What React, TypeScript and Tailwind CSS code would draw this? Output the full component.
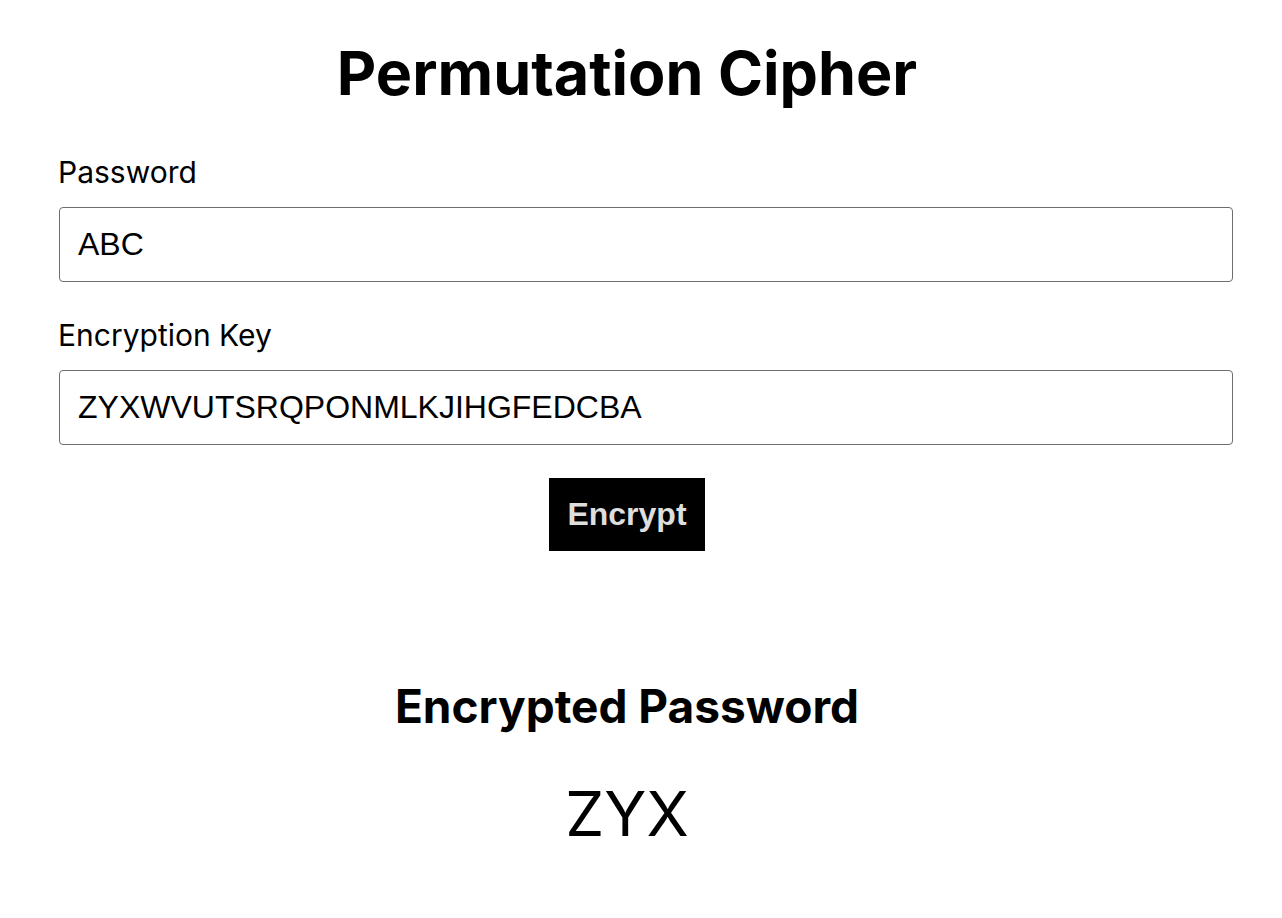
import { useState } from "react";

// simple permutation: each letter of the password maps to the key letter at its alphabet index
function encrypt(text: string, key: string) {
  return text
    .toUpperCase()
    .split("")
    .map((ch) => {
      const i = ch.charCodeAt(0) - 65;
      return i >= 0 && i < 26 && key[i] ? key[i] : ch;
    })
    .join("");
}

export default function App() {
  const [password, setPassword] = useState("ABC");
  const [key, setKey] = useState("ZYXWVUTSRQPONMLKJIHGFEDCBA");
  const [result, setResult] = useState(encrypt("ABC", "ZYXWVUTSRQPONMLKJIHGFEDCBA"));

  return (
    <div className="min-h-screen bg-white font-['Inter',sans-serif] text-black">
      <div className="w-[1195px] pl-[59px]">
        <h1 className="pt-[37px] text-center text-[61px] font-bold leading-[72px]">Permutation Cipher</h1>

        <label className="mt-[45px] -ml-px block text-[30px] leading-[36px]">Password</label>
        <input
          type="text"
          value={password}
          onChange={(e) => setPassword(e.target.value)}
          className="mt-[17px] box-content block w-full rounded-[4px] border border-[#6e6e6e] px-[18px] py-[18px] font-['Liberation_Sans',Arial,sans-serif] text-[32px] leading-[37px] outline-none"
        />

        <label className="mt-[35px] -ml-px block text-[30px] leading-[36px]">Encryption Key</label>
        <input
          type="text"
          value={key}
          onChange={(e) => setKey(e.target.value)}
          className="mt-[17px] box-content block w-full rounded-[4px] border border-[#6e6e6e] px-[18px] py-[18px] font-['Liberation_Sans',Arial,sans-serif] text-[32px] leading-[37px] outline-none"
        />

        <div className="mt-[33px] flex justify-center">
          <button
            onClick={() => setResult(encrypt(password, key))}
            className="bg-black px-[18px] py-[18px] font-['Liberation_Sans',Arial,sans-serif] text-[32px] font-bold leading-[37px] text-[#dedede]"
          >
            Encrypt
          </button>
        </div>

        <h2 className="mt-[128px] text-center text-[46px] font-bold leading-[54px]">Encrypted Password</h2>
        <p className="mt-[43px] text-center text-[62px] leading-[76px]">{result}</p>
      </div>
    </div>
  );
}
